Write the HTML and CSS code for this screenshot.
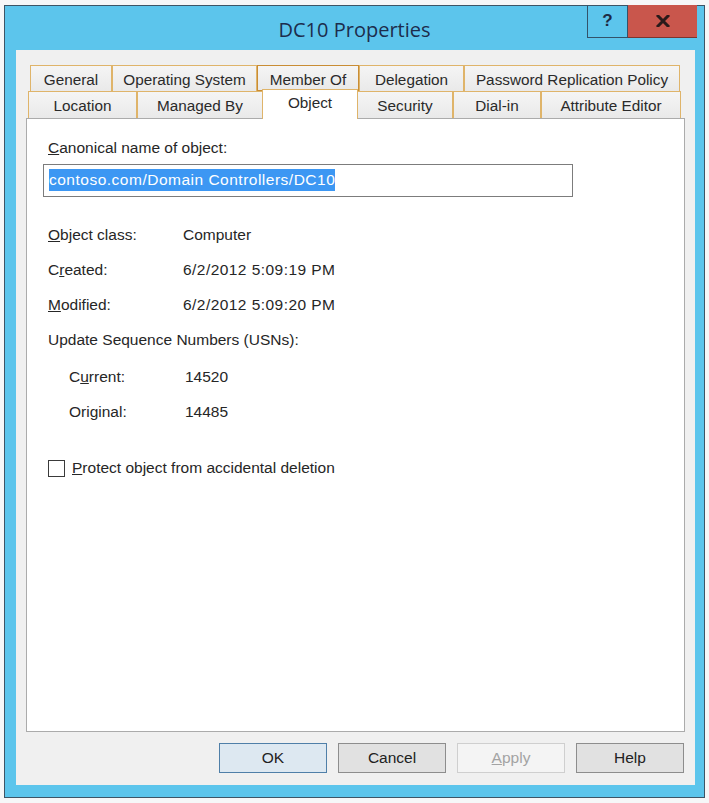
FILE: index.html
```
<!DOCTYPE html>
<html lang="en">
  <head>
    <meta charset="UTF-8" />
    <meta name="viewport" content="width=device-width, initial-scale=1.0" />
    <title>DC10 Properties</title>
    <link rel="stylesheet" href="styles.css">
  </head>
  <body>
    <div class="window">
      <div class="titlebar">
        <div></div>
        <div class="title">DC10 Properties</div>
        <div class="caption-buttons">
          <div class="cap cap-help">?</div>
          <div class="cap cap-close">
            <svg width="14" height="12" viewBox="0 0 14 12">
              <path d="M2 1 L12 11 M12 1 L2 11" stroke="#2a1a1a" stroke-width="3" stroke-linecap="square" />
            </svg>
          </div>
        </div>
      </div>

      <div class="client">
        <div class="tabs">
          <div class="tab-row row-top">
            <div class="tab tab-general">General</div>
            <div class="tab tab-os">Operating System</div>
            <div class="tab tab-member is-hot">Member Of</div>
            <div class="tab tab-delegation">Delegation</div>
            <div class="tab tab-prp">Password Replication Policy</div>
          </div>
          <div class="tab-row row-bottom">
            <div class="tab tab-location">Location</div>
            <div class="tab tab-managed">Managed By</div>
            <div class="tab tab-object is-selected">Object</div>
            <div class="tab tab-security">Security</div>
            <div class="tab tab-dialin">Dial-in</div>
            <div class="tab tab-attr">Attribute Editor</div>
          </div>
        </div>

        <div class="panel">
          <div class="field-label"><u>C</u>anonical name of object:</div>
          <div class="textbox"><span class="selection">contoso.com/Domain Controllers/DC10</span></div>

          <div class="info-grid">
            <div><u>O</u>bject class:</div>
            <div>Computer</div>
            <div>C<u>r</u>eated:</div>
            <div class="date">6/2/2012 5:09:19 PM</div>
            <div><u>M</u>odified:</div>
            <div class="date">6/2/2012 5:09:20 PM</div>
          </div>

          <div class="usn-title">Update Sequence Numbers (USNs):</div>
          <div class="usn-grid">
            <div>C<u>u</u>rrent:</div>
            <div>14520</div>
            <div>Ori<u>g</u>inal:</div>
            <div>14485</div>
          </div>

          <label class="check-row">
            <span class="checkbox"></span>
            <span><u>P</u>rotect object from accidental deletion</span>
          </label>
        </div>

        <div class="buttons">
          <div class="btn btn-default">OK</div>
          <div class="btn">Cancel</div>
          <div class="btn btn-disabled"><u>A</u>pply</div>
          <div class="btn">Help</div>
        </div>
      </div>
    </div>
  </body>
</html>
```

FILE: styles.css
```
/* Reset */
* {
  box-sizing: border-box;
}

body {
  margin: 0;
  background-color: #f6f7f8;
  font-family: "Liberation Sans", Arial, sans-serif;
  font-size: 15.5px;
  color: #262626;
}

/* Window frame */
.window {
  width: 701px;
  height: 793px;
  margin: 5px 0 0 4px;
  border: 1px solid #3d5566;
  background-color: #5cc5ec;
}

.titlebar {
  height: 44px;
  display: grid;
  grid-template-columns: 1fr auto 1fr;
}

.title {
  padding-top: 10px;
  font-family: "Open Sans", "Noto Sans", sans-serif;
  font-size: 20px;
  color: #1c2d4c;
}

.caption-buttons {
  justify-self: end;
  align-self: start;
  display: flex;
  margin-right: 7px;
  margin-top: -1px;
}

.cap {
  height: 33px;
  display: flex;
  align-items: center;
  justify-content: center;
}

.cap-help {
  width: 41px;
  border: 1px solid #33536a;
  border-top: none;
  font-weight: bold;
  font-size: 17px;
  color: #1d2b44;
}

.cap-close {
  width: 69px;
  background-color: #c9564c;
  border-bottom: 1px solid #7a3530;
}

/* Client area */
.client {
  height: 735px;
  margin: 0 9px 0 11px;
  background-color: #f0f0f0;
  display: flex;
  flex-direction: column;
}

.tabs {
  margin-top: 15px;
}

.tab-row {
  display: flex;
  align-items: flex-start;
}

.row-top {
  margin-left: 14px;
}

.row-bottom {
  margin-left: 12px;
  margin-top: -1px;
}

.tab {
  height: 27px;
  padding-top: 2px;
  line-height: 24px;
  text-align: center;
  font-size: 15.3px;
  color: #2a2a2a;
  border: 1px solid #dfb46a;
  background: linear-gradient(#f5f5f5, #e9e9e9);
  white-space: nowrap;
}

.row-bottom .tab {
  border-bottom: none;
}

.tab.is-hot {
  border-color: #c98d35;
  border-bottom-width: 2px;
}

.tab.is-selected {
  position: relative;
  z-index: 1;
  height: 30px;
  margin: -2px -1px -1px;
  padding-top: 1px;
  background: #ffffff;
}

.tab-general { width: 82px; }
.tab-os { width: 145px; }
.tab-member { width: 102px; }
.tab-delegation { width: 105px; }
.tab-prp { width: 216px; }

.tab-location { width: 109px; }
.tab-managed { width: 126px; }
.tab-object { width: 96px; }
.tab-security { width: 96px; }
.tab-dialin { width: 88px; }
.tab-attr { width: 140px; }

/* Page content */
.panel {
  height: 614px;
  margin: 0 10px;
  padding: 20px 0 0 21px;
  border: 1px solid #ababab;
  background-color: #ffffff;
}

.field-label {
  line-height: 18px;
}

.textbox {
  width: 530px;
  height: 33px;
  margin: 7px 0 0 -5px;
  padding: 4px 0 0 5px;
  border: 1px solid #7c7c7c;
}

.selection {
  display: inline-block;
  line-height: 22px;
  letter-spacing: 0.5px;
  background-color: #3c97f3;
  color: #ffffff;
}

.info-grid {
  margin-top: 20px;
  display: grid;
  grid-template-columns: 135px auto;
  grid-auto-rows: 35px;
  align-items: center;
}

.date {
  letter-spacing: 0.45px;
}

.usn-title {
  height: 35px;
  line-height: 35px;
}

.usn-grid {
  margin: 2px 0 0 21px;
  display: grid;
  grid-template-columns: 116px auto;
  grid-auto-rows: 35px;
  align-items: center;
}

.check-row {
  margin-top: 29px;
  display: flex;
  align-items: center;
  gap: 7px;
  height: 20px;
}

.checkbox {
  width: 17px;
  height: 17px;
  border: 1px solid #3a3a3a;
  background-color: #ffffff;
}

/* Dialog buttons */
.buttons {
  display: flex;
  justify-content: flex-end;
  gap: 11px;
  margin: 11px 11px 0 0;
}

.btn {
  width: 108px;
  height: 30px;
  line-height: 28px;
  text-align: center;
  border: 1px solid #8d8d8d;
  background-color: #e1e1e1;
  color: #222222;
}

.btn-default {
  border-color: #4f7fa8;
  background-color: #dde8f1;
}

.btn-disabled {
  border-color: #cfcfcf;
  background-color: #f4f4f4;
  color: #a3a3a3;
}
```
